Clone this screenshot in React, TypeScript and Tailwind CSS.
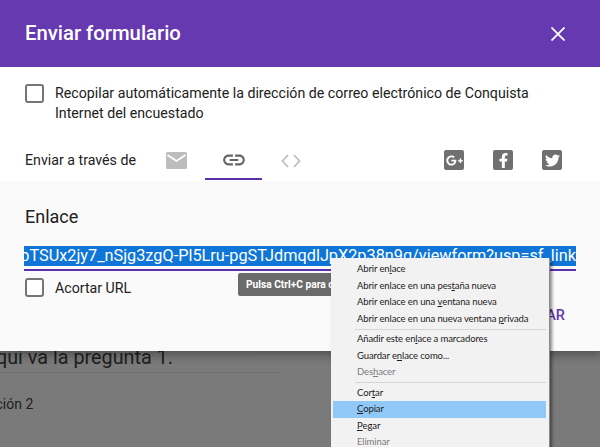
import React from "react";
import { FaGooglePlusG, FaFacebookF, FaTwitter } from "react-icons/fa";

function Checkbox() {
  return <div className="w-[19px] h-[19px] shrink-0 rounded-[3px] border-2 border-[#757575] bg-white" />;
}

function Social({ children }: { children: React.ReactNode }) {
  return (
    <div className="w-[20px] h-[20px] rounded-[2px] bg-[#707070] text-white flex items-center justify-center">
      {children}
    </div>
  );
}

type Part = string | { u: string };
type Item = { parts: Part[]; muted?: boolean; active?: boolean };

function Row({ item }: { item: Item }) {
  return (
    <div
      className={`h-[16.5px] ml-[2px] mr-[3px] pl-[24px] flex items-center whitespace-pre ${
        item.active ? "bg-[#90c8f7]" : ""
      } ${item.muted ? "text-[#7d7d7d]" : "text-[#1c1c1c]"}`}
    >
      {item.parts.map((p, i) =>
        typeof p === "string" ? <span key={i}>{p}</span> : <u key={i}>{p.u}</u>
      )}
    </div>
  );
}

const groupA: Item[] = [
  { parts: ["Abrir en", { u: "l" }, "ace"] },
  { parts: ["Abrir enlace en una pes", { u: "t" }, "aña nueva"] },
  { parts: ["Abrir enlace en una ", { u: "v" }, "entana nueva"] },
  { parts: ["Abrir enlace en una nueva ventana ", { u: "p" }, "rivada"] },
];
const groupB: Item[] = [
  { parts: ["Añadir este en", { u: "l" }, "ace a marcadores"] },
  { parts: ["Guardar e", { u: "n" }, "lace como..."] },
  { parts: ["Des", { u: "h" }, "acer"], muted: true },
];
const groupC: Item[] = [
  { parts: ["Cor", { u: "t" }, "ar"] },
  { parts: [{ u: "C" }, "opiar"], active: true },
  { parts: [{ u: "P" }, "egar"] },
  { parts: ["Eliminar"], muted: true },
];

function Separator() {
  return <div className="h-px my-[1.5px] ml-[24px] mr-[3px] bg-[#d6d6d6]" />;
}

export default function App() {
  return (
    <div className="relative w-[600px] h-[447px] overflow-hidden bg-[#7a7a7a] font-['Roboto',sans-serif]">
      <div className="relative z-10 h-[351px] flex flex-col shadow-[0_2px_10px_rgba(0,0,0,0.35)]">
        <header className="h-[67px] bg-[#6639b1] pl-[25px] pr-[35px] flex items-center justify-between text-white">
          <h1 className="text-[20.3px] font-medium">Enviar formulario</h1>
          <svg width="14" height="14" viewBox="0 0 14 14" stroke="currentColor" strokeWidth="1.8" fill="none">
            <path d="M0.5 0.5L13.5 13.5M13.5 0.5L0.5 13.5" />
          </svg>
        </header>

        <section className="h-[114px] bg-white flex flex-col">
          <div className="flex items-start gap-[11px] pl-[25px] pr-[60px] pt-[16px] text-[14.2px] leading-[20px] text-[#212121]">
            <div className="mt-[1px]"><Checkbox /></div>
            <p>Recopilar automáticamente la dirección de correo electrónico de Conquista Internet del encuestado</p>
          </div>
          <div className="flex items-center pl-[25px] h-[39px] mt-[18px] text-[14.2px] text-[#212121]">
            <span className="w-[141px]">Enviar a través de</span>
            <svg width="21" height="17" viewBox="0 0 21 17" className="text-[#bdbdbd]">
              <rect width="21" height="17" rx="1.5" fill="currentColor" />
              <path d="M1.5 3L10.5 9L19.5 3" stroke="#fff" strokeWidth="1.8" fill="none" />
            </svg>
            <div className="w-[57px] h-full ml-[18px] flex items-center justify-center border-b-2 border-[#5a30ac]">
              <svg width="26" height="26" viewBox="0 0 24 24" fill="#666">
                <path d="M3.9 12c0-1.71 1.39-3.1 3.1-3.1h4V7H7c-2.76 0-5 2.24-5 5s2.24 5 5 5h4v-1.9H7c-1.71 0-3.1-1.39-3.1-3.1zM8 13h8v-2H8v2zm9-6h-4v1.9h4c1.71 0 3.1 1.39 3.1 3.1s-1.39 3.1-3.1 3.1h-4V17h4c2.76 0 5-2.24 5-5s-2.24-5-5-5z" />
              </svg>
            </div>
            <svg width="20" height="14" viewBox="0 0 20 14" stroke="#bdbdbd" strokeWidth="1.8" fill="none" className="ml-[19px]">
              <path d="M7 1L1.5 7L7 13M13 1L18.5 7L13 13" />
            </svg>
            <div className="ml-auto mr-[38px] flex gap-[29px] -mt-px">
              <Social><FaGooglePlusG size={17} /></Social>
              <Social><FaFacebookF size={15} /></Social>
              <Social><FaTwitter size={15} /></Social>
            </div>
          </div>
        </section>

        <section className="flex-1 bg-[#fafafa] pl-[25px] pr-[24px] pt-[24px]">
          <h2 className="text-[18px] leading-[24px] text-[#212121]">Enlace</h2>
          <div className="mt-[17px] -ml-px border-b-2 border-[#5a30ac] pb-[3px]">
            <div className="h-[20px] bg-[#0f76d8] text-white text-[16.3px] leading-[20px] flex justify-end overflow-hidden whitespace-nowrap">
              <span className="shrink-0">1FAIpQLSfbTSUx2jy7_nSjg3zgQ-Pl5Lru-pgSTJdmqdlJpX2p38n9g/viewform?usp=sf_link</span>
            </div>
          </div>
          <div className="flex items-center gap-[11px] mt-[7px] h-[19px] text-[14.2px] leading-[20px] text-[#212121]">
            <Checkbox />
            <span>Acortar URL</span>
          </div>
          <div className="mt-[10px] text-right text-[14.5px] leading-[17px] font-medium text-[#5e35b1] pr-[11px]">COPIAR</div>
        </section>
      </div>

      <div className="h-[96px] -mt-[6px] bg-gradient-to-b from-[#6c6c6c] to-[#7a7a7a] to-[20px] text-[#1e1e1e] relative">
        <p className="text-[19.8px] leading-[26px] -ml-[17px] whitespace-nowrap">Aquí va la pregunta 1.</p>
        <div className="h-px w-[280px] mt-[1px] bg-[#707070]" />
        <p className="text-[14px] -ml-[22px] mt-[21px] whitespace-nowrap">Opción 2</p>
      </div>

      <div className="absolute left-[238px] top-[273px] z-20 w-[120px] h-[23px] rounded-[2px] bg-[#6b6b6b] text-white text-[10.2px] font-bold pl-[8px] flex items-center whitespace-nowrap overflow-hidden">
        Pulsa Ctrl+C para copiar
      </div>

      <div className="absolute left-[331px] top-[258px] z-30 w-[219px] h-[200px] pt-[3px] bg-[#f2f2f2] border-r border-[#8a8a8a] shadow-[2px_2px_3px_rgba(0,0,0,0.45)] text-[9.5px] tracking-[-0.12px] font-['Lato',sans-serif]">
        {groupA.map((it, i) => <Row key={i} item={it} />)}
        <Separator />
        {groupB.map((it, i) => <Row key={i} item={it} />)}
        <Separator />
        {groupC.map((it, i) => <Row key={i} item={it} />)}
      </div>
    </div>
  );
}
